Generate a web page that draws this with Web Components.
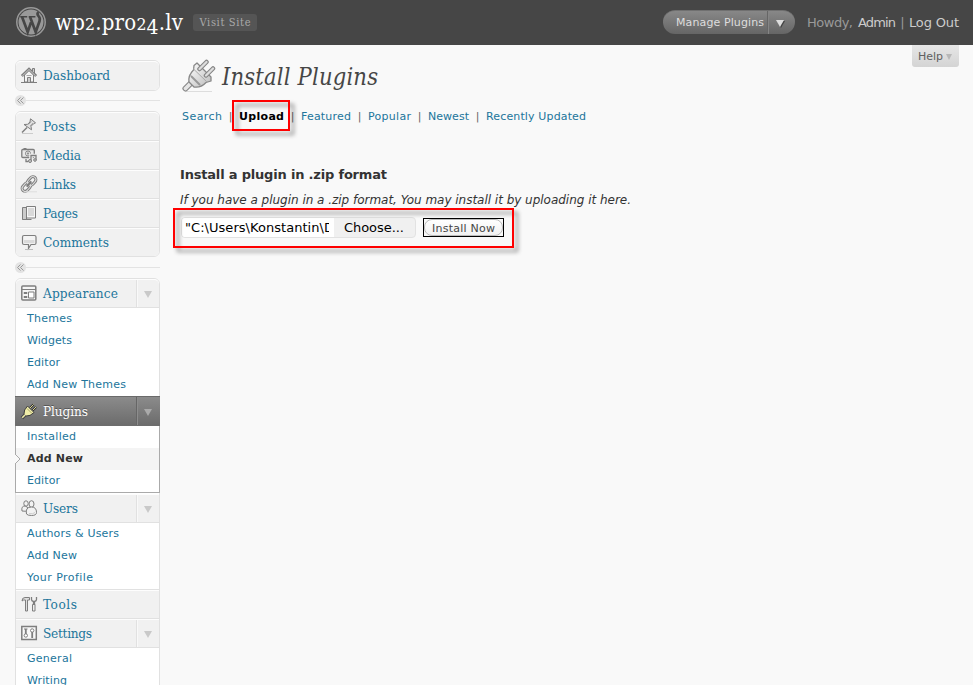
<!DOCTYPE html>
<html lang="en">
<head>
<meta charset="utf-8">
<title>Install Plugins</title>
<style>
html,body{margin:0;height:685px;overflow:hidden;background:#f9f9f9}
body{font:11px "DejaVu Sans",sans-serif;color:#333}
</style>
</head>
<body>
<wp-admin></wp-admin>
<script>
const SERIF = '"DejaVu Serif Condensed","DejaVu Serif",serif';
const define = (name, html, setup) => customElements.define(name, class extends HTMLElement {
  connectedCallback() {
    if (this.shadowRoot) return;
    const root = this.attachShadow({mode: 'open'});
    root.innerHTML = typeof html === 'function' ? html(this) : html;
    if (setup) setup(this, root);
  }
});

/* Text tracked to a given width */
define('fit-text', '<style>:host{display:inline-block;white-space:nowrap}span{display:inline-block}</style><span><slot></slot></span>', (el, root) => {
  const w = +el.getAttribute('w'), s = root.querySelector('span');
  if (!w) return;
  const n = el.textContent.length;
  s.style.letterSpacing = (w - s.getBoundingClientRect().width) / Math.max(1, n - 1) + 'px';
  el.style.width = w + 'px';
});

const ICONS = {
  home: '<path d="M3.500 8v7h9V8L8 3.500z" fill="#f4f4f4"/><path d="M.8 9 8 2 15.200 9" fill="none" stroke-width="2.600"/><path d="M1.300 9 8 2.500 14.700 9" fill="none" stroke="#ddd" stroke-width=".8"/><path d="M11.500 4V1.500h2V6M6.500 15v-4.500h3V15" fill="#ccc"/><path d="M5.500 8.500h5" stroke="#aaa"/><path d="M0 15.500h16"/>',
  pin: '<path d="m1 14.500 5-5" stroke-width="1.500"/><path d="m9.500.800 5 4-2 1-2.500 2.500.500 3.500L3 6.500l3.500-.200L9 4z" fill="#e0e0e0"/><path d="m7.500 6.500 3-3M9 8l3-3" stroke="#aaa"/><path d="M1 15.500h11" stroke="#ccc"/>',
  media: '<rect x=".8" y="2.500" width="12.500" height="8" rx="1" fill="#e8e8e8" stroke-width="1.300"/><path d="M2.500 1.500h3"/><circle cx="7" cy="6.500" r="2.500" fill="#fff"/><circle cx="7" cy="6.500" r=".8" fill="#bbb"/><path d="M10 14V8.500h5V13" stroke="#f1f1f1" stroke-width="3.500"/><path d="M10 14V8.500h5V13M5 12v2.500h2" stroke-width="1.300"/><circle cx="9" cy="14" r="1.500" fill="#ccc"/><circle cx="14" cy="13" r="1.300" fill="#ccc"/>',
  link: '<g fill="none" transform="rotate(-48 8 8)"><rect x="-.8" y="5" width="9.500" height="6" rx="3" stroke-width="3"/><rect x="7.300" y="5" width="9.500" height="6" rx="3" stroke-width="3"/><rect x="-.8" y="5" width="9.500" height="6" rx="3" stroke="#ddd"/><rect x="7.300" y="5" width="9.500" height="6" rx="3" stroke="#ddd"/><path d="M4.500 8h7" stroke-width="2"/></g><path d="M3 15.800h13" stroke="#ddd"/>',
  pages: '<path d="M1.500 2.500h4v12h-4zM1.500 14.500h9" fill="#ccc"/><path d="M5.500 1.500h9v11.500h-9z" fill="#f7f7f7"/><path d="M7 4h6M7 6h6M7 8h6M7 10h6" stroke="#bbb"/>',
  comment: '<path d="M3 1.500h10.500q1.500 0 1.500 1.500v6q0 1.500-1.500 1.500H10l-2.500 4v-4H3Q1.500 10.500 1.500 9V3Q1.500 1.500 3 1.500z" fill="#f4f4f4" stroke-width="1.200"/><path d="M3 6h10.500v3.200H3z" fill="#dadada" stroke="none"/><path d="M4 15.500h8" stroke="#bbb"/>',
  layout: '<rect x=".8" y="1" width="14" height="14" rx="1" fill="#f5f5f5" stroke-width="1.500"/><path d="M1 4.500h14"/><path d="M3 7.500h3v1H3zM3 11.500h3v1H3zM7.500 7h5.500v6H7.500z" fill="#fff"/>',
  users: '<g fill="#f2f2f2"><ellipse cx="5" cy="3.500" rx="2.200" ry="2.700"/><path d="M1 11q-1-5 3-5 3 0 3 4-2 2-6 1z"/><ellipse cx="10.500" cy="4" rx="2.500" ry="3.300"/><path d="M5.500 14q-1.500-7 5-7 5 0 5 5.500 0 3-5 3-4 0-5-1.500z"/></g><path d="M8 13.500q4 1 6-1" stroke="#ccc" fill="none"/>',
  tools: '<path d="M1 5q0-3.500 3-3.500h4.500V4H6.500v11h-2V4Q2.500 3.500 1 5z" fill="#ddd"/><path d="M10.500 1v2.500q0 1.500 2 2v3h1v-3q2-.5 2-2V1" fill="none" stroke-width="1.300"/><path d="M11.500 8.500h2.500v6.500h-2.500z" fill="#eee"/>',
  settings: '<rect x=".8" y="1.500" width="14.500" height="13" fill="#f8f8f8" stroke-width="1.500"/><path d="M4.800 4v5M11.200 7v6" stroke-width="1.800"/><circle cx="4.800" cy="10.500" r="1.700" fill="#fff"/><circle cx="11.200" cy="5.500" r="1.700" fill="#fff"/><path d="M3 4h3.500"/>',
  plug: '<path d="m9 5 3.500-3.500M11.500 7.500 15 4" stroke="#333" stroke-width="2.400"/><path d="m9 5 3.500-3.500M11.500 7.500 15 4" stroke="#e9e59a" stroke-width=".9"/><path d="m1 15 3-3" stroke="#444" stroke-width="3.400"/><path d="m6.500 3 6.500 6.500q-4 4-8 3.500l-2-2q-.500-4 3.500-8z" fill="#f0eda8" stroke="#3c3c3c"/><path d="m1.200 14.800 3-3" stroke="#f0eda8" stroke-width="1.600"/><path d="m6 5.500 4.500 4.500" stroke="#aaa66a"/>'
};
define('menu-icon', el => `<style>:host{display:block;width:16px;height:16px;flex:none}svg{display:block;overflow:visible}</style><svg width="16" height="16" viewBox="0 0 16 16" fill="none" stroke="#7e7e7e">${ICONS[el.getAttribute('name')]}</svg>`);

define('site-logo', `<style>:host{display:block;width:30px;height:30px}svg{display:block}</style>
<svg width="30" height="30" viewBox="0 0 30 30"><circle cx="15" cy="15" r="14.200" fill="#464646" stroke="#999" stroke-width="1.500"/><circle cx="15" cy="15" r="12.500" fill="#999"/>
<path d="M4.200 9.700h7M12.700 9.700h6.700" stroke="#464646" stroke-width="1.500"/><path d="M6 9.800 11.700 25 15 15.400M14 9.800 19.700 25 23.500 14.300Q24.500 11 22.400 8.900 20.500 6.600 22.600 5" fill="none" stroke="#464646" stroke-width="2.700"/><path d="m4 11 5.500 15Q.8 21.500 4 11z" fill="#999"/></svg>`);

define('top-bar', `<style>
:host{display:flex;box-sizing:border-box;height:45px;background:#464646;align-items:flex-start;padding:7px 14px 0 16px;color:#ccc}
h1{margin:0 0 0 9px;font:22px/31px ${SERIF};color:#fff}
h1 small{font-size:17.500px;line-height:0}h1 small.d{font-size:21px;vertical-align:-4px}
.visit{margin:7px 0 0 10px;width:64px;height:17px;border-radius:3px;background:#555;color:#aaa;font:11px/18px ${SERIF};text-align:center}
.pill{margin:3px 12px 0 auto;display:flex;box-sizing:border-box;width:132px;height:24px;border-radius:12px;background:linear-gradient(#888,#656565);border-top:1px solid #707070;line-height:23px;color:#ddd;padding-left:13px}
.pill i{margin-left:auto;width:28px;border-left:1px solid #666;box-shadow:inset 1px 0 #858585;display:flex;align-items:center;padding-left:8px;box-sizing:border-box}
.pill i:before{content:"";border:4px solid transparent;border-top:7px solid #ddd;border-bottom:0;margin-top:1px;filter:drop-shadow(1px 1px 0 #444)}
.user{display:flex;font-size:13px;line-height:32px;color:#999}b{font-weight:400;color:#ccc}.bar{width:13px;text-align:center}
</style><site-logo></site-logo><h1><fit-text w="128">wp<small>2</small>.pro<small>2</small><small class="d">4</small>.lv</fit-text></h1>
<div class="visit"><fit-text w="51">Visit Site</fit-text></div>
<div class="pill"><fit-text w="88">Manage Plugins</fit-text><i></i></div>
<div class="user"><fit-text w="46">Howdy,</fit-text><b style="margin-left:5px"><fit-text w="38">Admin</fit-text></b><span class="bar">|</span><b><fit-text w="50">Log Out</fit-text></b></div>`);

define('menu-separator', `<style>:host{display:flex;align-items:center;height:11px}i{width:11px;height:11px;border-radius:6px;background:#e3e3e3;display:grid;place-items:center}hr{flex:1;border:0;height:1px;margin:0;background:#e3e3e3}svg{display:block}</style>
<i><svg width="7" height="7" fill="none" stroke="#999"><path d="M3.500.500.500 3.500l3 3M6.500.500l-3 3 3 3"/></svg></i><hr>`);

define('menu-group', '<style>:host{display:block;border:1px solid #e1e1e1;border-radius:6px;background:#fff;box-sizing:border-box}</style><slot></slot>');

define('menu-item', el => `<style>
:host{display:block}
.head{display:flex;box-sizing:border-box;background:#f1f1f1;border-top:1px solid #fdfdfd;align-items:center;padding:0 0 1px 5px;color:#21759b;font:13.500px/26px ${SERIF};border-bottom:1px solid #e1e1e1;height:29px}
menu-icon{margin-top:-1px}
:host(:first-child) .head{border-radius:5px 5px 0 0}
:host(:last-child:not([open])) .head{border-bottom:0;height:28px;border-radius:0 0 5px 5px}
:host(:only-child:not([open])) .head{height:29px;border-radius:5px;padding-bottom:2px}
fit-text{margin-left:6px}
.arrow{margin:0 0 -1px auto;align-self:stretch;width:22px;border-left:1px solid #e1e1e1;box-shadow:inset 1px 0 #f9f9f9;display:grid;place-items:center}
.arrow:before{content:"";border:4.500px solid transparent;border-top:7px solid #c9c9c9;border-bottom:0;margin:2px 1px 0 0}
.sub{border-bottom:1px solid #e1e1e1}
:host([current]) .head{margin:-1px -1px 0;height:30px;background:linear-gradient(#8b8b8b,#6c6c6c);border-top:1px solid #6a6a6a;border-bottom:1px solid #6d6d6d;color:#fff;text-shadow:0 -1px 0 #555;padding:0 0 0 6px;position:relative}
:host([current]) .arrow{border-color:#666;box-shadow:inset 1px 0 #8d8d8d;margin-bottom:0;width:23px}:host([current]) .arrow:before{border-top-color:#aaa}
:host([current]) .sub{margin:0 -1px 1px;border:1px solid #aaa;border-top:0}
</style><div class="head"><menu-icon name="${el.getAttribute('icon')}"></menu-icon><fit-text w="${el.getAttribute('w')}">${el.getAttribute('label')}</fit-text>${el.hasAttribute('open') ? '<span class="arrow"></span>' : ''}</div>${el.hasAttribute('open') ? '<div class="sub"><slot></slot></div>' : ''}`);

define('sub-item', el => `<style>:host{display:block;height:22px;font-size:11px;color:#21759b}
div{display:flex;box-sizing:border-box;height:22px;line-height:19px;padding:0 0 1px 11px;align-items:center}
:host([current]){font-weight:700;color:#333;background:#f4f4f4}
svg{width:6px;height:10px;margin:1px 6px 0 -12px;flex:none}</style><div>${el.hasAttribute('current') ? '<svg viewBox="0 0 6 10"><path d="M0 0 5 5 0 10" fill="#f9f9f9" stroke="#aaa"/></svg>' : ''}<fit-text w="${el.getAttribute('w')}">${el.innerHTML}</fit-text></div>`);

define('side-menu', `<style>:host{display:block;width:145px;padding:15px 0 0 15px}menu-group.one{height:31px}menu-separator{margin:4px 0 5px}menu-group.five{height:146px;margin-bottom:5px}menu-group.tall{height:440px}</style>
<menu-group class="one"><menu-item icon="home" label="Dashboard" w="67"></menu-item></menu-group>
<menu-separator></menu-separator>
<menu-group class="five"><menu-item icon="pin" label="Posts" w="33"></menu-item><menu-item icon="media" label="Media" w="38"></menu-item><menu-item icon="link" label="Links" w="33"></menu-item><menu-item icon="pages" label="Pages" w="35"></menu-item><menu-item icon="comment" label="Comments" w="66"></menu-item></menu-group>
<menu-separator></menu-separator>
<menu-group class="tall">
<menu-item open icon="layout" label="Appearance" w="75"><sub-item w="45">Themes</sub-item><sub-item w="45">Widgets</sub-item><sub-item w="33">Editor</sub-item><sub-item w="99">Add New Themes</sub-item></menu-item>
<menu-item open current icon="plug" label="Plugins" w="45"><sub-item w="49">Installed</sub-item><sub-item w="56" current>Add New</sub-item><sub-item w="33">Editor</sub-item></menu-item>
<menu-item open icon="users" label="Users" w="35"><sub-item w="92">Authors &amp; Users</sub-item><sub-item w="50">Add New</sub-item><sub-item w="66">Your Profile</sub-item></menu-item>
<menu-item icon="tools" label="Tools" w="34"></menu-item>
<menu-item open icon="settings" label="Settings" w="49"><sub-item w="45">General</sub-item><sub-item w="40">Writing</sub-item></menu-item>
</menu-group>`);

define('help-tab', `<style>:host{display:flex;box-sizing:border-box;width:47px;height:22px;padding-left:6px;background:linear-gradient(#e6e6e6,#d4d4d4);border-radius:0 0 3px 3px;line-height:22px;color:#606060;align-items:center}fit-text{margin-top:2px}i{margin:2px 0 0 3px;border:3.500px solid transparent;border-top:6px solid #b8b8b8;border-bottom:0}</style><fit-text w="25">Help</fit-text><i></i>`);

define('plug-icon', `<style>:host{display:block;width:34px;height:34px}svg{display:block}</style>
<svg width="34" height="34" viewBox="0 0 34 34"><defs><linearGradient id="g" x2="1" y2="1"><stop stop-color="#fff"/><stop offset="1" stop-color="#bbb"/></linearGradient></defs>
<path d="M4 32.500h26" stroke="#ddd"/><g stroke-linecap="round" fill="none"><path d="m3.500 29.500 5-5" stroke="#888" stroke-width="6"/><path d="m3.500 29.500 5-5" stroke="#e6e6e6" stroke-width="3.800"/></g>
<path d="m15 4 14 14v4l-5 1.500q-5 5.500-12 4.500l-5-5q-1-6.500 4.500-12l.500-4.500z" fill="url(#g)" stroke="#888" stroke-width="1.300" stroke-linejoin="round"/><path d="m7.500 15.500 12 12M11 9.500 25 23" stroke="#aaa"/><path d="m9 17 9 9" stroke="#999" stroke-width="2"/>
<g stroke-linecap="round"><path d="m17.500 10 7-7M24 16.500l7-7" stroke="#858585" stroke-width="4.500"/><path d="m17.500 10 7-7M24 16.500l7-7" stroke="#ddd" stroke-width="2.300"/></g></svg>`);

define('tab-links', `<style>:host{display:flex;line-height:16px;color:#21759b}i{width:17px;text-align:center;font-style:normal;color:#666}b{color:#000}</style>
<fit-text w="40">Search</fit-text><i>|</i><b><fit-text w="45">Upload</fit-text></b><i>|</i><fit-text w="50">Featured</fit-text><i>|</i><fit-text w="43">Popular</fit-text><i>|</i><fit-text w="41">Newest</fit-text><i>|</i><fit-text w="100">Recently Updated</fit-text>`);

define('upload-form', `<style>:host{display:flex;color:#000;font-size:13px;align-items:flex-start}
.file{display:flex;box-sizing:border-box;width:235px;height:21px;border:1px solid #e2e2e2;border-radius:4px;background:#f0f0f0;line-height:19px;overflow:hidden}
.path{width:147px;overflow:hidden;background:#fff;padding-left:3px;box-sizing:border-box}.gap{width:5px;background:#fff}
.choose{margin-left:10px}
button{margin:1px 0 0 7px;width:81px;height:19px;padding:0;border:1px solid #000;background:#f9f9f9;display:grid}
button span{display:block}
.face{border:1px solid #bbb;border-radius:8px;background:linear-gradient(#fff,#f1f1f1);font:11px/17px "DejaVu Sans",sans-serif;height:15px;color:#464646;text-align:center}</style>
<div class="file"><div class="path"><fit-text w="149">"C:\\Users\\Konstantin\\D</fit-text></div><div class="gap"></div><div class="choose"><fit-text w="60">Choose...</fit-text></div></div>
<button><span class="face"><fit-text w="63">Install Now</fit-text></span></button>`);

define('red-mark', `<style>:host{position:absolute;box-sizing:border-box;border:2px solid #f00;filter:drop-shadow(4px 4px 2px rgba(0,0,0,.45));pointer-events:none}</style>`);

define('plugin-page', `<style>:host{display:block;flex:1;padding-left:20px}
.top{display:flex;align-items:flex-start;height:56px}plug-icon{margin:14px 0 0 2px}
h2{margin:14px 0 0 6px;font:italic 23.500px/36px ${SERIF};color:#464646}help-tab{margin:0 14px 0 auto}
tab-links{margin:8px 0 0 2px}h3{margin:42px 0 0;font:bold 13px/16px "DejaVu Sans",sans-serif;color:#333}
p{margin:9px 0 0;font:italic 12px/16px "DejaVu Sans",sans-serif}upload-form{margin:9px 0 0 1px}
</style><div class="top"><plug-icon></plug-icon><h2><fit-text w="156">Install Plugins</fit-text></h2><help-tab></help-tab></div>
<tab-links></tab-links><h3><fit-text w="207">Install a plugin in .zip format</fit-text></h3>
<p><fit-text w="451">If you have a plugin in a .zip format, You may install it by uploading it here.</fit-text></p><upload-form></upload-form>
<red-mark style="left:232px;top:100px;width:58px;height:31px"></red-mark><red-mark style="left:173px;top:208px;width:341px;height:40px"></red-mark>`);

define('wp-admin', '<style>:host{display:block;position:relative;width:973px;height:685px;overflow:hidden;background:#f9f9f9}main{display:flex}</style><top-bar></top-bar><main><side-menu></side-menu><plugin-page></plugin-page></main>');
</script>
</body>
</html>
